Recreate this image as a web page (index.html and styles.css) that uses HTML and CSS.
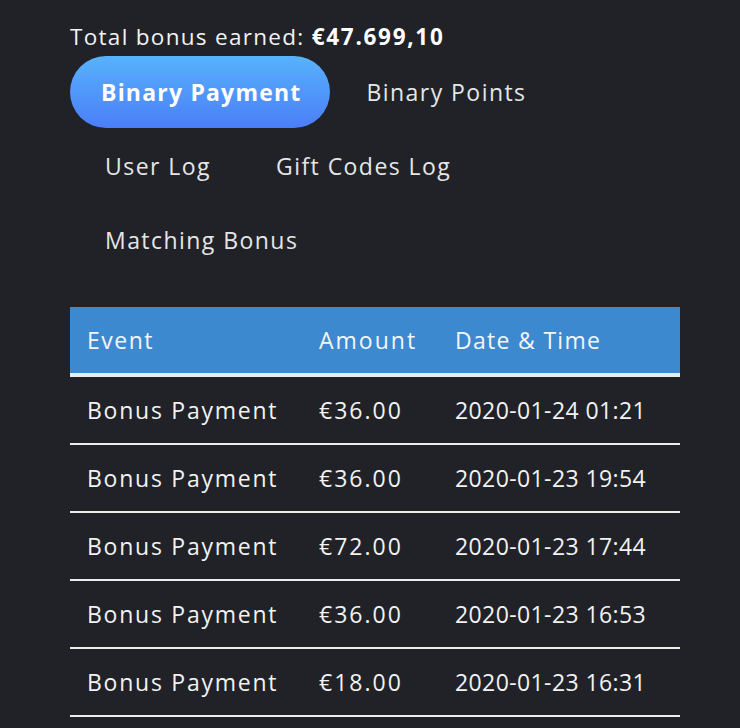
FILE: index.html
```html
<!DOCTYPE html>
<html>
<head>
<meta charset="utf-8">
<link rel="stylesheet" href="styles.css">
</head>
<body>
<div class="page">
  <div class="total">Total bonus earned: <strong>€47.699,10</strong></div>
  <div class="tabs">
    <span class="tab active">Binary Payment</span>
    <span class="tab">Binary Points</span>
    <span class="tab">User Log</span>
    <span class="tab">Gift Codes Log</span>
    <span class="tab">Matching Bonus</span>
  </div>
  <table class="log">
    <thead>
      <tr><th class="c1">Event</th><th class="c2">Amount</th><th class="c3">Date &amp; Time</th></tr>
    </thead>
    <tbody>
      <tr><td class="ev">Bonus Payment</td><td class="amt">€36.00</td><td class="dt">2020-01-24 01:21</td></tr>
      <tr><td class="ev">Bonus Payment</td><td class="amt">€36.00</td><td class="dt">2020-01-23 19:54</td></tr>
      <tr><td class="ev">Bonus Payment</td><td class="amt">€72.00</td><td class="dt">2020-01-23 17:44</td></tr>
      <tr><td class="ev">Bonus Payment</td><td class="amt">€36.00</td><td class="dt">2020-01-23 16:53</td></tr>
      <tr><td class="ev">Bonus Payment</td><td class="amt">€18.00</td><td class="dt">2020-01-23 16:31</td></tr>
    </tbody>
  </table>
</div>
</body>
</html>
```
FILE: styles.css
```css
html, body {
  margin: 0;
  padding: 0;
  background: #202228;
  height: 100%;
  overflow: hidden;
}
body {
  font-family: "Open Sans", "DejaVu Sans", sans-serif;
  color: #f2f2f2;
}
.page {
  padding: 22px 60px 0 70px;
}
.total {
  font-size: 22.5px;
  line-height: 29px;
  letter-spacing: 1.3px;
}
.total strong {
  font-weight: 700;
  color: #ffffff;
  letter-spacing: 1.7px;
}
.tabs {
  display: flex;
  flex-wrap: wrap;
  margin-top: 5px;
  row-gap: 2px;
  width: 610px;
}
.tab {
  height: 72px;
  display: flex;
  align-items: center;
  padding: 0 30px 0 35px;
  font-size: 23px;
  letter-spacing: 1.45px;
  color: #e6e6e6;
  border-radius: 36px;
}
.tab.wide { letter-spacing: 1.8px; }
.tab.active {
  background: linear-gradient(180deg, #58b2fd 0%, #4a7ef8 100%);
  color: #ffffff;
  font-weight: 700;
  letter-spacing: 1.2px;
  padding: 0 29px 0 31px;
  margin-right: 1px;
}
.log {
  margin-top: 31px;
  width: 610px;
  border-collapse: collapse;
  font-size: 23px;
}
.log th {
  background: #3d89cf;
  font-weight: 400;
  text-align: left;
  height: 66px;
  padding: 0 0 0 17px;
  border-bottom: 4px solid #ececec;
  color: #f5f5f5;
  letter-spacing: 1.5px;
}
.log th.c2 { letter-spacing: 2px; }
.log th.c3 { letter-spacing: 1.3px; }
.log .c1 { width: 215px; }
.log .c2 { width: 119px; }
.log td {
  height: 66px;
  padding: 0 0 0 17px;
  border-bottom: 2px solid #ececec;
  white-space: nowrap;
}
.log td.ev { letter-spacing: 1.75px; }
.log td.amt { letter-spacing: 2px; }
.log td.dt { letter-spacing: 0.4px; }
```
